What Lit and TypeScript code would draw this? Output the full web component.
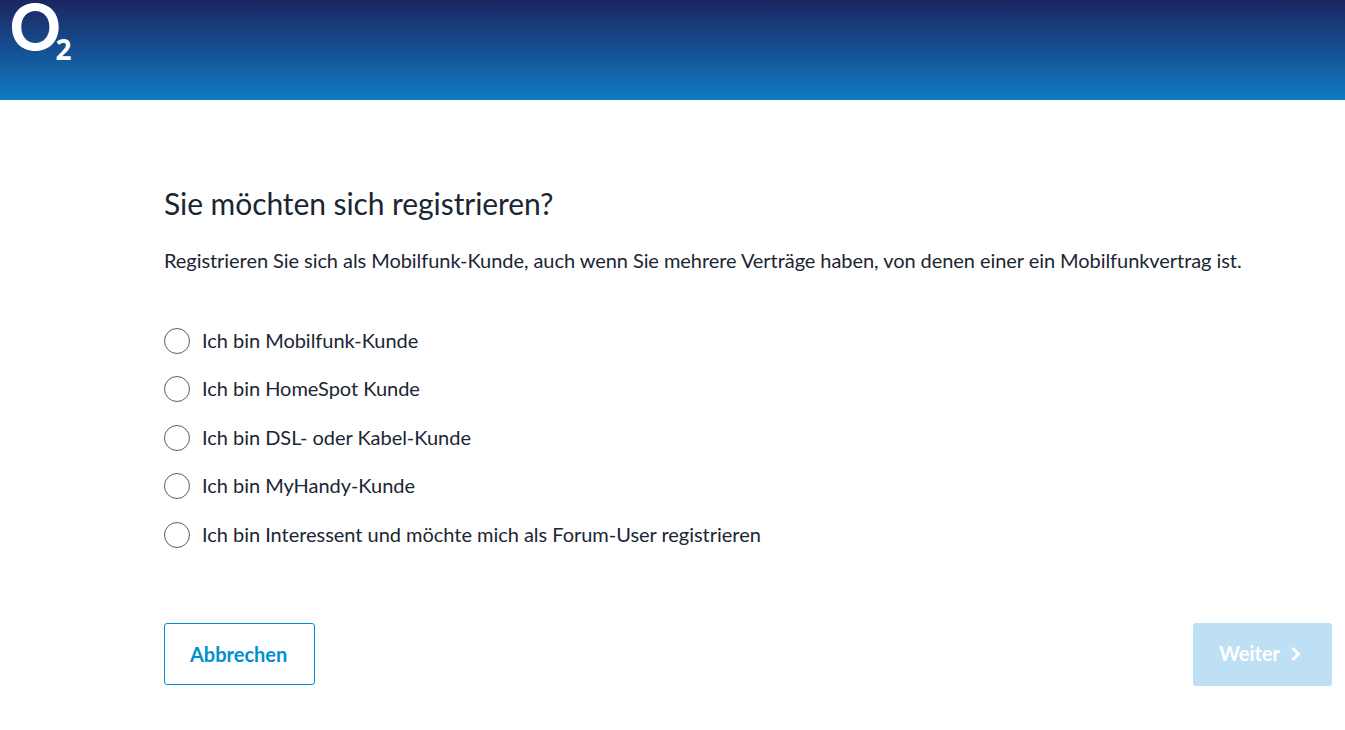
import { LitElement, html, css } from "lit";
import { customElement } from "lit/decorators.js";

const OPTIONS = [
  "Ich bin Mobilfunk-Kunde",
  "Ich bin HomeSpot Kunde",
  "Ich bin DSL- oder Kabel-Kunde",
  "Ich bin MyHandy-Kunde",
  "Ich bin Interessent und möchte mich als Forum-User registrieren",
];

@customElement("app-root")
export class AppRoot extends LitElement {
  static styles = css`
    :host {
      display: block;
      height: 730px;
      background: #fff;
      color: #1a2633;
      font-family: Lato, "Noto Sans", sans-serif;
      overflow: hidden;
    }
    .header {
      height: 100px;
      background: linear-gradient(180deg, #1c2560 0%, #0f7bc4 100%);
    }
    .logo {
      display: block;
    }
    .logo text {
      font-family: "Open Sans", sans-serif;
      font-weight: 700;
      font-size: 28px;
      fill: #fff;
    }
    main {
      padding: 84px 13px 0 164px;
    }
    h1 {
      margin: 0;
      font-size: 30px;
      font-weight: 400;
      line-height: 38px;
      letter-spacing: -0.07px;
    }
    .intro {
      margin: 23px 0 0;
      font-size: 20px;
      line-height: 30px;
      letter-spacing: -0.06px;
    }
    .options {
      margin-top: 53px;
      display: flex;
      flex-direction: column;
      gap: 22.4px;
    }
    label {
      display: flex;
      align-items: center;
      gap: 12px;
      height: 26px;
      font-size: 20px;
      line-height: 24px;
      letter-spacing: -0.03px;
    }
    .option-text {
      padding-bottom: 2px;
    }
    .radio {
      width: 26px;
      height: 26px;
      box-sizing: border-box;
      border: 1px solid #5a5f66;
      border-radius: 50%;
    }
    .actions {
      margin-top: 75px;
      display: flex;
      justify-content: space-between;
      align-items: flex-start;
    }
    .btn {
      box-sizing: border-box;
      height: 62px;
      border-radius: 3px;
      font: 700 20px Lato, "Noto Sans", sans-serif;
      display: flex;
      align-items: center;
      padding: 0 25px;
    }
    .cancel {
      width: 151px;
      background: #fff;
      border: 1px solid #0090d0;
      color: #0090d0;
    }
    .next {
      width: 139px;
      height: 63px;
      background: #bde0f4;
      border: 0;
      color: #fff;
      padding: 0 26px 2px;
      gap: 10px;
    }
    .next svg {
      margin-top: 2px;
    }
  `;

  render() {
    return html`
      <header class="header">
        <svg class="logo" width="80" height="70" viewBox="0 0 80 70" aria-label="O2">
          <path
            fill="#fff"
            fill-rule="evenodd"
            d="M35.300 3C49 3 58.700 12.500 58.700 27S49 51 35.300 51 12 41.500 12 27 21.600 3 35.300 3ZM35.300 11C27 11 21.300 17.500 21.300 27S27 43 35.300 43 49.400 36.500 49.400 27 43.600 11 35.300 11Z"
          />
          <text x="55.500" y="60">2</text>
        </svg>
      </header>
      <main>
        <h1>Sie möchten sich registrieren?</h1>
        <p class="intro">
          Registrieren Sie sich als Mobilfunk-Kunde, auch wenn Sie mehrere Verträge haben, von denen einer ein Mobilfunkvertrag ist.
        </p>
        <div class="options">
          ${OPTIONS.map((o) => html`<label><span class="radio"></span><span class="option-text">${o}</span></label>`)}
        </div>
        <div class="actions">
          <button class="btn cancel">Abbrechen</button>
          <button class="btn next">
            Weiter
            <svg width="12" height="16" viewBox="0 0 12 16">
              <path d="M2.500 2L8.500 8L2.500 14" fill="none" stroke="#fff" stroke-width="3" />
            </svg>
          </button>
        </div>
      </main>
    `;
  }
}
